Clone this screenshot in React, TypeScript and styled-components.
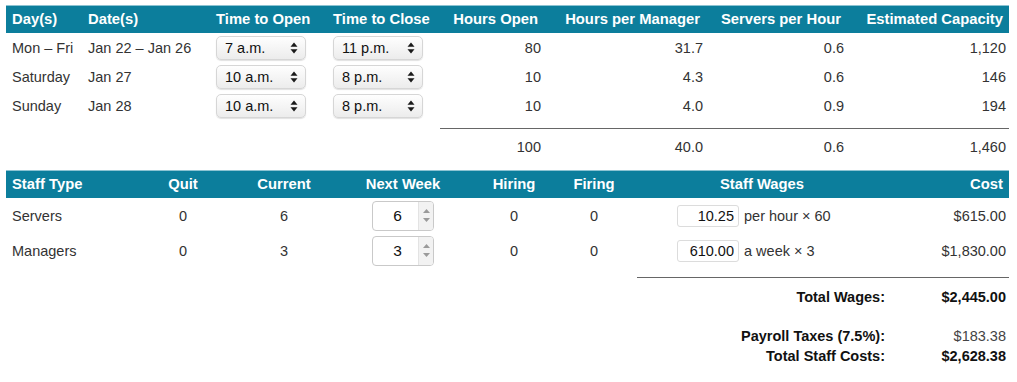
import React from "react";
import styled, { createGlobalStyle } from "styled-components";

const TEAL = "#0c7e9c";

const GlobalStyle = createGlobalStyle`
  * { box-sizing: border-box; }
  body {
    margin: 0;
    background: #fff;
    font-family: "Liberation Sans", Arial, Helvetica, sans-serif;
    font-size: 14.5px;
    color: #333;
  }
`;

const Page = styled.div`
  width: 1009px;
  padding: 5px 0 0 6px;
`;

const ScheduleGrid = styled.div`
  display: grid;
  grid-template-columns: 76px 128px 117px 113px 104px 162px 141px 162px;
`;

const StaffGrid = styled.div`
  display: grid;
  grid-template-columns: 134px 86px 116px 122px 100px 60px 276px 109px;
  margin-top: 14px;
`;

type Align = "left" | "right" | "center";

const Head = styled.div<{ $align?: Align }>`
  background: ${TEAL};
  color: #fff;
  font-weight: bold;
  font-size: 14.8px;
  height: 28px;
  line-height: 28px;
  padding: 0 6px;
  text-align: ${(p) => p.$align ?? "left"};
  white-space: nowrap;
  box-shadow: inset 0 1px 0 #8cc3d2;
`;

const justify = (a?: Align) =>
  a === "right" ? "flex-end" : a === "center" ? "center" : "flex-start";

const Cell = styled.div<{ $align?: Align; $h?: number }>`
  display: flex;
  align-items: center;
  justify-content: ${(p) => justify(p.$align)};
  height: ${(p) => p.$h ?? 29}px;
  padding: ${(p) => (p.$align === "center" ? "0" : "0 3px 0 6px")};
  white-space: nowrap;
`;

const Blank = styled.div<{ $span: number }>`
  grid-column: span ${(p) => p.$span};
`;

const TotalCell = styled.div`
  margin-top: 8px;
  border-top: 1px solid #666;
  padding: 10px 3px 0 6px;
  line-height: 17px;
  text-align: right;
`;

const SelectWrap = styled.div`
  position: relative;
  width: 90px;
  height: 24px;
`;

const Select = styled.select`
  appearance: none;
  -webkit-appearance: none;
  width: 100%;
  height: 100%;
  border: 1px solid #d6d6d6;
  border-radius: 5px;
  background: linear-gradient(#fefefe, #ececec);
  box-shadow: 0 1px 1px rgba(0, 0, 0, 0.12);
  font: 14.5px "Liberation Sans", Arial, sans-serif;
  color: #111;
  padding: 0 0 0 8px;
  outline: none;
`;

const SelectArrows = styled.svg`
  position: absolute;
  right: 8px;
  top: 6px;
  pointer-events: none;
`;

const Stepper = styled.div`
  display: flex;
  width: 62px;
  height: 30px;
  border: 1px solid #c9c9c9;
  border-radius: 4px;
  overflow: hidden;
  background: #fff;
`;

const StepInput = styled.input`
  width: 45px;
  border: 0;
  padding: 0 0 0 4px;
  text-align: center;
  font: 15.5px "Liberation Sans", Arial, sans-serif;
  color: #111;
  outline: none;
  background: transparent;
`;

const StepButtons = styled.div`
  flex: 1;
  background: #f2f2f2;
  border-left: 1px solid #e3e3e3;
  display: flex;
  flex-direction: column;
  align-items: center;
  justify-content: center;
  gap: 5px;
`;

const WageCell = styled.div`
  display: flex;
  align-items: center;
  gap: 5px;
  height: 35px;
  padding-left: 53px;
  white-space: nowrap;
`;

const WageInput = styled.input`
  width: 62px;
  height: 22px;
  border: 1px solid #dcdcdc;
  border-radius: 3px;
  padding: 0 4px 0 0;
  text-align: right;
  font: 14.5px "Liberation Sans", Arial, sans-serif;
  color: #111;
  outline: none;
`;

const Summary = styled.div`
  width: 372px;
  margin: 9px 0 0 631px;
  border-top: 1px solid #666;
  padding-top: 11px;
  display: grid;
  grid-template-columns: 1fr 124px;
  row-gap: 3px;
  line-height: 17px;
`;

const SumLabel = styled.div<{ $gap?: boolean }>`
  font-weight: bold;
  color: #111;
  text-align: right;
  margin-bottom: ${(p) => (p.$gap ? "19px" : "0")};
`;

const SumValue = styled.div<{ $bold?: boolean; $gap?: boolean }>`
  font-weight: ${(p) => (p.$bold ? "bold" : "normal")};
  color: ${(p) => (p.$bold ? "#111" : "#444")};
  text-align: right;
  padding-right: 3px;
  margin-bottom: ${(p) => (p.$gap ? "19px" : "0")};
`;

const hours = ["7 a.m.", "8 a.m.", "9 a.m.", "10 a.m.", "11 a.m.", "8 p.m.", "9 p.m.", "10 p.m.", "11 p.m."];

const TimeSelect = ({ value }: { value: string }) => (
  <SelectWrap>
    <Select defaultValue={value}>
      {hours.map((h) => (
        <option key={h}>{h}</option>
      ))}
    </Select>
    <SelectArrows width="8" height="12" viewBox="0 0 8 12">
      <path d="M0.5 4.8 L4 0.5 L7.5 4.8 Z" fill="#1a1a1a" />
      <path d="M0.5 7.2 L4 11.5 L7.5 7.2 Z" fill="#1a1a1a" />
    </SelectArrows>
  </SelectWrap>
);

const NumberStepper = ({ value }: { value: number }) => (
  <Stepper>
    <StepInput defaultValue={value} />
    <StepButtons>
      <svg width="7" height="4" viewBox="0 0 7 4">
        <path d="M0 4 L3.5 0 L7 4 Z" fill="#9a9a9a" />
      </svg>
      <svg width="7" height="4" viewBox="0 0 7 4">
        <path d="M0 0 L3.5 4 L7 0 Z" fill="#9a9a9a" />
      </svg>
    </StepButtons>
  </Stepper>
);

const schedule = [
  { day: "Mon – Fri", dates: "Jan 22 – Jan 26", open: "7 a.m.", close: "11 p.m.", hours: "80", perManager: "31.7", servers: "0.6", capacity: "1,120" },
  { day: "Saturday", dates: "Jan 27", open: "10 a.m.", close: "8 p.m.", hours: "10", perManager: "4.3", servers: "0.6", capacity: "146" },
  { day: "Sunday", dates: "Jan 28", open: "10 a.m.", close: "8 p.m.", hours: "10", perManager: "4.0", servers: "0.9", capacity: "194" },
];

const staff = [
  { type: "Servers", quit: 0, current: 6, next: 6, hiring: 0, firing: 0, wage: "10.25", unit: "per hour × 60", cost: "$615.00" },
  { type: "Managers", quit: 0, current: 3, next: 3, hiring: 0, firing: 0, wage: "610.00", unit: "a week × 3", cost: "$1,830.00" },
];

export default function App() {
  return (
    <Page>
      <GlobalStyle />
      <ScheduleGrid>
        <Head>Day(s)</Head>
        <Head>Date(s)</Head>
        <Head>Time to Open</Head>
        <Head>Time to Close</Head>
        <Head $align="right">Hours Open</Head>
        <Head $align="right">Hours per Manager</Head>
        <Head $align="right">Servers per Hour</Head>
        <Head $align="right">Estimated Capacity</Head>
        {schedule.map((r) => (
          <React.Fragment key={r.day}>
            <Cell>{r.day}</Cell>
            <Cell>{r.dates}</Cell>
            <Cell>
              <TimeSelect value={r.open} />
            </Cell>
            <Cell>
              <TimeSelect value={r.close} />
            </Cell>
            <Cell $align="right">{r.hours}</Cell>
            <Cell $align="right">{r.perManager}</Cell>
            <Cell $align="right">{r.servers}</Cell>
            <Cell $align="right">{r.capacity}</Cell>
          </React.Fragment>
        ))}
        <Blank $span={4} />
        <TotalCell>100</TotalCell>
        <TotalCell>40.0</TotalCell>
        <TotalCell>0.6</TotalCell>
        <TotalCell>1,460</TotalCell>
      </ScheduleGrid>

      <StaffGrid>
        <Head>Staff Type</Head>
        <Head $align="center">Quit</Head>
        <Head $align="center">Current</Head>
        <Head $align="center">Next Week</Head>
        <Head $align="center">Hiring</Head>
        <Head $align="center">Firing</Head>
        <Head $align="center">Staff Wages</Head>
        <Head $align="right">Cost</Head>
        {staff.map((s) => (
          <React.Fragment key={s.type}>
            <Cell $h={35}>{s.type}</Cell>
            <Cell $h={35} $align="center">{s.quit}</Cell>
            <Cell $h={35} $align="center">{s.current}</Cell>
            <Cell $h={35} $align="center">
              <NumberStepper value={s.next} />
            </Cell>
            <Cell $h={35} $align="center">{s.hiring}</Cell>
            <Cell $h={35} $align="center">{s.firing}</Cell>
            <WageCell>
              <WageInput defaultValue={s.wage} />
              <span>{s.unit}</span>
            </WageCell>
            <Cell $h={35} $align="right">{s.cost}</Cell>
          </React.Fragment>
        ))}
      </StaffGrid>

      <Summary>
        <SumLabel $gap>Total Wages:</SumLabel>
        <SumValue $bold $gap>$2,445.00</SumValue>
        <SumLabel>Payroll Taxes (7.5%):</SumLabel>
        <SumValue>$183.38</SumValue>
        <SumLabel>Total Staff Costs:</SumLabel>
        <SumValue $bold>$2,628.38</SumValue>
      </Summary>
    </Page>
  );
}
